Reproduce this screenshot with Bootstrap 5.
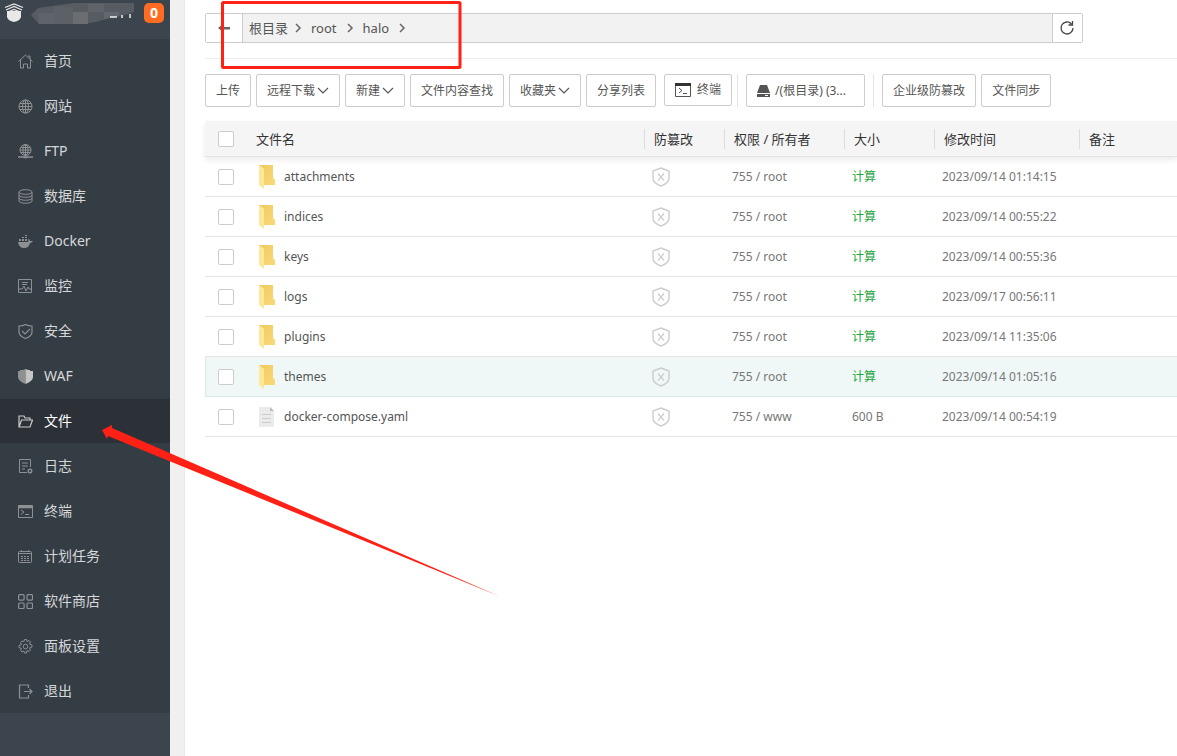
<!DOCTYPE html>
<html lang="zh-CN">
<head>
<meta charset="utf-8">
<meta name="viewport" content="width=device-width, initial-scale=1">
<title>文件</title>
<link href="https://cdn.jsdelivr.net/npm/bootstrap@5.3.0/dist/css/bootstrap.min.css" rel="stylesheet">
<style>
body{font-family:"Noto Sans","Noto Sans CJK SC",sans-serif;font-size:12px;line-height:20px;color:#555;background:#f0f0f0}
a{text-decoration:none;color:inherit}
svg{flex:none;display:block}
.line-ic{fill:none;stroke:currentColor}
.side{width:170px;flex:none;background:#3c444d}
.side-top{height:39px;padding:0 6px 0 4px}
.side-top svg{margin-top:3px}
.count{background:#ff6c22;border-radius:5px;width:20px;height:20px;color:#fff;font-weight:700;font-size:14px;margin-top:3px}
.menu{background:#353d44;font-size:14px;gap:1px}
.menu a{height:44px;padding:0 18px;gap:11px;color:#d5d8da}
.menu a svg{color:#8d9194;width:15px;height:15px}
.menu a.on{background:#2c3138;color:#fff}
.menu a.on svg{color:#c8cacc}
.main-area{margin-left:14px;border-left:1px solid #e8e8e8;background:#fff;padding:13px 0 0 20px;min-width:0}
.pathbar{height:30px;margin-right:94px;border:1px solid #ccc;border-radius:2px;background:#f2f2f2;font-size:13px}
.pathbar button{background:#fff;border:0;padding:0;color:#555}
.back{width:37px;border-right:1px solid #ccc!important}
.reload{width:30px;border-left:1px solid #ccc!important}
.crumbs{gap:9px;padding-left:6px}
.crumbs a:first-child{margin-right:-3px}
.rule-line{height:1px;background:#eee;margin:15px 0}
.tool{height:33px;border:1px solid #ccc;border-radius:2px;background:#fff;color:#555;padding:0 10px;white-space:nowrap;display:flex;align-items:center}
.tool svg{margin-left:2px}
.tool .lead-ic{margin:0 5px 0 0}
.tool.term{height:32px;margin:0 0 1px 3px}
.term .lead-ic{margin-right:6px}
.disk{width:119px}
.split{width:1px;height:33px;background:#e6e6e6}
.files{table-layout:fixed;width:100%;margin-top:14px;border-collapse:separate;border-spacing:0}
.files th{height:36px;background:#f5f5f5;border-bottom:1px solid #e4e4e4;font-size:13px;font-weight:400;color:#333;padding:0}
.files thead{box-shadow:0 3px 6px #00000014}
.files th span{display:block;border-left:1px solid #ddd;padding-left:9px}
.files th:nth-child(2){padding-left:9px}
.files td{height:40px;border-bottom:1px solid #e6e6e6;padding:1px 0 0 8px;color:#777;font-size:12px}
.files .pick{padding:0 0 0 13px}
.files .fname{color:#555;gap:8px;padding-left:3px}
.files .calc{color:#20a53a}
.files tr.hov td{background:#eff8f6;border-color:#dcebe8}
.files tr.hov td:first-child{border-left:1px solid #dcebe8;padding-left:12px}
.pick input{appearance:none;display:block;width:16px;height:16px;margin:0;border:1px solid #ccc;border-radius:2px;background:#fff}
.pick input:checked{background:#20a53a}
.marks{left:0;top:0;pointer-events:none}
</style>
<script src="https://cdn.jsdelivr.net/npm/bootstrap@5.3.0/dist/js/bootstrap.bundle.min.js"></script>
</head>
<body>
<svg class="position-absolute" width="0" height="0" aria-hidden="true">
<defs><linearGradient id="fold" x2="1" y2="1"><stop stop-color="#f0ca60"/><stop offset="1" stop-color="#fad978"/></linearGradient></defs>
<symbol id="folder" viewBox="0 0 18 24"><path d="M1 0h14v13l2 2v5H5z" fill="url(#fold)"/><path d="M1 0 6 4v20L1 20z" fill="#ffe799"/></symbol>
<symbol id="doc" viewBox="0 0 18 24"><path d="M1 2h11l4 4v16H1z" fill="#ebebeb"/><path d="M12 2v4h4z" fill="#bbb"/><path d="M4 9.500h9M4 13.500h9M4 17.500h9" stroke="#ccc"/></symbol>
<symbol id="shield" viewBox="0 0 18 20"><path d="M9 1 17 4v7q0 5-8 8-8-3-8-8V4z" fill="none" stroke="#ccc" stroke-width="1.400"/><path d="m6 6.500 6 7m0-7-6 7" stroke="#ccc" stroke-width="1.200"/></symbol>
<symbol id="down" viewBox="0 0 12 12"><path d="m1 3 5 5 5-5" fill="none" stroke="#555" stroke-width="1.200"/></symbol>
<symbol id="next" viewBox="0 0 8 12"><path d="m2 2 4 4-4 4" fill="none" stroke="#666" stroke-width="1.500"/></symbol>
</svg>
<div class="d-flex min-vh-100 position-relative overflow-hidden">
<aside class="side">
  <div class="side-top d-flex align-items-start justify-content-between">
    <svg width="20" height="20" viewBox="0 0 20 20"><path d="M3 8h14v6q-1 4-7 5-6-1-7-5z" fill="#e8e8e8"/><path d="M1 4.500 10 1l9 3.500M2 7l8-3.500L18 7M4 9l6-2.500L16 9" fill="none" stroke="#e8e8e8" stroke-width="1.300"/></svg>
    <svg width="108" height="24" viewBox="0 0 108 24"><path d="M1 12 8 5 43 0h61v9l-12 4-12 2-14 4-14 2H9z" fill="#575c63"/><path d="M8 10h16v11H9z" fill="#5f646b"/><path d="M24 4h19v17H24z" fill="#5c6168"/><path d="M43 9h15v12H43z" fill="#6a6e73"/><path d="M58 1h16v8H58z" fill="#5f646b"/><path d="M74 9h15v4l-15 3z" fill="#62676d"/><path d="M80 14h7m5-2v3m8-4v4" stroke="#eee" stroke-width="1.500"/></svg>
    <span class="count d-flex align-items-center justify-content-center">0</span>
  </div>
  <nav class="menu d-flex flex-column">
    <a href="#" class="d-flex align-items-center"><svg class="line-ic" viewBox="0 0 15 15"><path d="M.5 7.500 7.500 1l7 6.500M2.500 6v8h3v-4h4v4h3V6M10 2h2v3"/></svg>首页</a>
    <a href="#" class="d-flex align-items-center"><svg class="line-ic" viewBox="0 0 15 15"><circle cx="7.500" cy="7.500" r="6.500"/><ellipse cx="7.500" cy="7.500" rx="3" ry="6.500"/><path d="M7.500 1v13M1 7.500h13M2 4.500h11M2 10.500h11"/></svg>网站</a>
    <a href="#" class="d-flex align-items-center"><svg class="line-ic" viewBox="0 0 15 15"><circle cx="7.500" cy="6" r="5.500"/><ellipse cx="7.500" cy="6" rx="2.500" ry="5.500"/><path d="M7.500 0v12M2 6h11M3 3.500h9M3 8.500h9"/><path d="M0 13h15M5.500 13.500h4" stroke-width="1.500"/></svg>FTP</a>
    <a href="#" class="d-flex align-items-center"><svg class="line-ic" viewBox="0 0 15 15"><ellipse cx="7.500" cy="3" rx="6.500" ry="2.300"/><path d="M1 3v9c0 3 13 3 13 0V3M1 6c0 3 13 3 13 0M1 9c0 3 13 3 13 0"/></svg>数据库</a>
    <a href="#" class="d-flex align-items-center"><svg viewBox="0 0 15 15" fill="currentColor"><path d="M0 8h10q1-1 0-3 2 0 2 2h3q-1 2-3 2-1 5-6 5-5 0-6-6zM1 5h2v2H1zm3 0h2v2H4zm3 0h2v2H7zM4 3h2v1H4zm3 0h2v1H7zM7 1h2v1H7z"/></svg>Docker</a>
    <a href="#" class="d-flex align-items-center"><svg class="line-ic" viewBox="0 0 15 15"><path d="M.5.500h13v13H.500zM1 10h3l2-3 2 5 2-4 1 2h2M4 3.500h6M4 5.500h5"/></svg>监控</a>
    <a href="#" class="d-flex align-items-center"><svg class="line-ic" viewBox="0 0 15 15"><path d="M7.500.500Q10 2 14 2v6q0 4-6.500 6.500Q1 12 1 8V2q4 0 6.500-1.500zM4 7l3 3 5-5" stroke-width="1.200"/></svg>安全</a>
    <a href="#" class="d-flex align-items-center"><svg viewBox="0 0 15 15"><path d="M7.500 0v15Q0 12 0 8V2h2V1h3z" fill="#909090"/><path d="M7.500 0v15Q15 12 15 8V2h-3V1h-2z" fill="#c5c5c5"/></svg>WAF</a>
    <a href="#" class="on d-flex align-items-center"><svg class="line-ic" viewBox="0 0 15 15"><path d="M1 13V2h5l1 2h5v2M1 13 3.500 6h11L12 13z" stroke-width="1.200"/></svg>文件</a>
    <a href="#" class="d-flex align-items-center"><svg class="line-ic" viewBox="0 0 15 15"><path d="M9 13.500H1.500v-13h11V8M4 4h6M4 7h6M4 10h3"/><circle cx="12" cy="12" r="1.800" stroke-width="1.400"/></svg>日志</a>
    <a href="#" class="d-flex align-items-center"><svg class="line-ic" viewBox="0 0 15 15"><path d="M.5 1.500h14v12H.500zM3 6l3 2-3 2.500M7 10.500h4"/><path d="M0 3h15" stroke-width="2.500"/></svg>终端</a>
    <a href="#" class="d-flex align-items-center"><svg class="line-ic" viewBox="0 0 15 15"><rect x=".5" y="2.500" width="13" height="11" rx="1"/><path d="M1 4.500h13M3.500 1v2M10.500 1v2"/><path d="M3 7.500h9M3 9.500h9M3 11.500h9" stroke-dasharray="2 1"/></svg>计划任务</a>
    <a href="#" class="d-flex align-items-center"><svg class="line-ic" viewBox="0 0 15 15" stroke-width="1.200"><rect x=".6" y=".6" width="5.500" height="5.500" rx="1"/><rect x="9" y=".6" width="5.500" height="5.500" rx="1"/><rect x=".6" y="9" width="5.500" height="5.500" rx="1"/><rect x="9" y="9" width="5.500" height="5.500" rx="1"/></svg>软件商店</a>
    <a href="#" class="d-flex align-items-center"><svg class="line-ic" viewBox="0 0 15 15"><path d="M6 2.500 6.500.500h2l.500 2 2-1 1.500 1.500-1 2 2.500 1v2l-2.500 1 1 2-1.500 1.500-2-1-.5 2.500h-2L6 12l-2 1-1.500-1.500 1-2L1 8.500v-2l2.500-1-1-2L4 2z"/><circle cx="7.500" cy="7.500" r="2.300"/></svg>面板设置</a>
    <a href="#" class="d-flex align-items-center"><svg class="line-ic" viewBox="0 0 15 15"><path d="M10.500 4V1h-9v13h9v-3M6 7.500h8M11.500 5 14 7.500 11.500 10" stroke-width="1.200"/></svg>退出</a>
  </nav>
</aside>
<main class="main-area flex-grow-1">
  <div class="pathbar d-flex">
    <button class="back d-flex align-items-center justify-content-center" aria-label="返回"><svg width="12" height="12" viewBox="0 0 12 12"><path d="M0 6 5 2v3h7v2.500H5V10z" fill="#666"/></svg></button>
    <div class="crumbs d-flex align-items-center flex-grow-1"><a href="#">根目录</a><svg width="8" height="12"><use href="#next"/></svg><a href="#">root</a><svg width="8" height="12"><use href="#next"/></svg><a href="#">halo</a><svg width="8" height="12"><use href="#next"/></svg></div>
    <button class="reload d-flex align-items-center justify-content-center" aria-label="刷新"><svg width="16" height="16" viewBox="0 0 16 16"><path d="M12.500 4A6 6 0 1 0 14 8M13.500 1v4h-4" fill="none" stroke="#444" stroke-width="1.300"/></svg></button>
  </div>
  <div class="rule-line"></div>
  <div class="d-flex align-items-center">
    <div class="d-flex align-items-center" style="gap:5px">
      <button class="tool">上传</button>
      <button class="tool">远程下载<svg width="12" height="12"><use href="#down"/></svg></button>
      <button class="tool">新建<svg width="12" height="12"><use href="#down"/></svg></button>
      <button class="tool">文件内容查找</button>
      <button class="tool">收藏夹<svg width="12" height="12"><use href="#down"/></svg></button>
      <button class="tool">分享列表</button>
      <button class="tool term"><svg class="lead-ic" width="16" height="14" viewBox="0 0 16 14"><path d="M.5.500h15v13H.500zM4 5l3 2.500L4 10M8 10.500h4" fill="none" stroke="#555"/><path d="M0 0h16v3H0z" fill="#333"/></svg>终端</button>
      <span class="split"></span>
    </div>
    <button class="tool disk ms-2"><svg class="lead-ic" width="13" height="13" viewBox="0 0 13 13"><path d="M3 1h7l3 8H0zM0 10h13v3H0z" fill="#555"/><path d="M8 11.500h3" stroke="#fff"/></svg>/(根目录) (3...</button>
    <span class="split mx-2"></span>
    <div class="d-flex" style="gap:5px"><button class="tool">企业级防篡改</button><button class="tool">文件同步</button></div>
  </div>
  <table class="files">
    <colgroup><col style="width:42px"><col style="width:397px"><col style="width:80px"><col style="width:120px"><col style="width:90px"><col style="width:145px"><col></colgroup>
    <thead><tr><th class="pick"><input type="checkbox" aria-label="全选"></th><th>文件名</th><th><span>防篡改</span></th><th><span>权限 / 所有者</span></th><th><span>大小</span></th><th><span>修改时间</span></th><th><span>备注</span></th></tr></thead>
    <tbody id="rows"></tbody>
  </table>
</main>
<svg class="marks position-absolute" width="500" height="600" viewBox="0 0 500 600"><rect x="222.500" y="2.500" width="237.500" height="65" rx="1" fill="none" stroke="#ff2116" stroke-width="3"/><path d="M102 430 112 425 112 428 500 596.500 108 436 107 439z" fill="#ff2116"/></svg>
</div>
<script>
const files=[
 ['attachments','root',null,'2023/09/14 01:14:15'],
 ['indices','root',null,'2023/09/14 00:55:22'],
 ['keys','root',null,'2023/09/14 00:55:36'],
 ['logs','root',null,'2023/09/17 00:56:11'],
 ['plugins','root',null,'2023/09/14 11:35:06'],
 ['themes','root',null,'2023/09/14 01:05:16'],
 ['docker-compose.yaml','www','600 B','2023/09/14 00:54:19']];
document.getElementById('rows').innerHTML=files.map(([n,o,s,t])=>`<tr class="${n==='themes'?'hov':''}">
<td class="pick"><input type="checkbox" aria-label="${n}"></td>
<td><a href="#" class="fname d-flex align-items-center"><svg width="18" height="24"><use href="#${s?'doc':'folder'}"/></svg>${n}</a></td>
<td><svg width="18" height="20"><use href="#shield"/></svg></td>
<td>755 / ${o}</td><td>${s||'<a href="#" class="calc">计算</a>'}</td><td>${t}</td><td></td></tr>`).join('');
</script>
</body>
</html>
